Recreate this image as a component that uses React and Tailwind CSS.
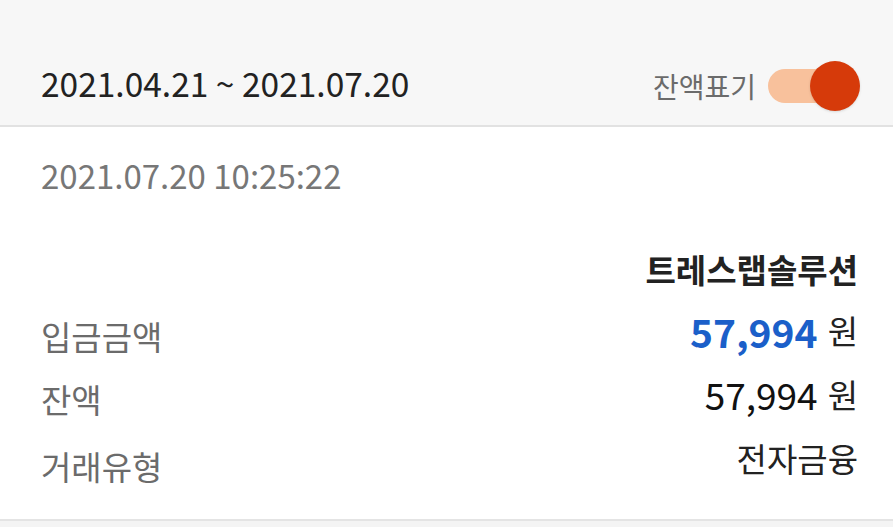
import { useState } from 'react';

const font = { fontFamily: '"Noto Sans CJK KR", "Noto Sans", sans-serif' };

const Row = ({ label, children, labelPad }) => (
  <div className="flex h-[64px] items-center justify-between">
    <span className={`text-[33px] text-[#6b6b6b] ${labelPad}`}>{label}</span>
    <div className="flex items-center gap-[10px]">{children}</div>
  </div>
);

const App = () => {
  const [showBalance, setShowBalance] = useState(true);

  return (
    <div className="h-[527px] w-[893px] overflow-hidden bg-white" style={font}>
      {/* Period header */}
      <div className="flex h-[127px] items-center justify-between border-b-2 border-[#e2e2e2] bg-[#f7f7f7] pl-[41px] pr-[33px] pt-[46px]">
        <span className="mb-[5px] text-[33.5px] leading-none text-[#222]">2021.04.21 ~ 2021.07.20</span>
        <div className="flex items-center gap-[12px]">
          <span className="text-[28px] text-[#6b6b6b]">잔액표기</span>
          <button
            onClick={() => setShowBalance(!showBalance)}
            className="relative h-[50px] w-[92px]"
          >
            <span className={`absolute left-0 top-[8px] h-[34px] w-[78px] rounded-full ${showBalance ? 'bg-[#f8c19c]' : 'bg-[#d9d9d9]'}`} />
            <span className={`absolute top-0 h-[50px] w-[50px] rounded-full shadow-sm ${showBalance ? 'left-[42px] bg-[#d63a0a]' : 'left-0 bg-[#fafafa]'}`} />
          </button>
        </div>
      </div>

      {/* Transaction detail */}
      <div className="pl-[41px] pr-[35px] pt-[26px]">
        <div className="h-[44px] text-[33px] leading-[44px] text-[#777]">2021.07.20 10:25:22</div>

        <div className="mt-[51px] flex h-[44px] items-center justify-end">
          <span className="text-[33px] font-bold text-[#222]">트레스랩솔루션</span>
        </div>

        <div className="mt-[7px]">
          <Row label="입금금액" labelPad="pt-[12px]">
            <span className="text-[39px] font-bold text-[#1b5fc9]">57,994</span>
            <span className="text-[33px] text-[#222]">원</span>
          </Row>
          <Row label="잔액" labelPad="pt-[10px]">
            <span className="text-[37px] text-[#111]">57,994</span>
            <span className="text-[33px] text-[#222]">원</span>
          </Row>
          <Row label="거래유형" labelPad="pt-[16px]">
            <span className="text-[33px] text-[#222]">전자금융</span>
          </Row>
        </div>
      </div>

      <div className="mt-[28px] h-[2px] bg-[#e4e4e4]" />
      <div className="h-[6px] bg-[#f4f4f4]" />
    </div>
  );
};

export default App;
